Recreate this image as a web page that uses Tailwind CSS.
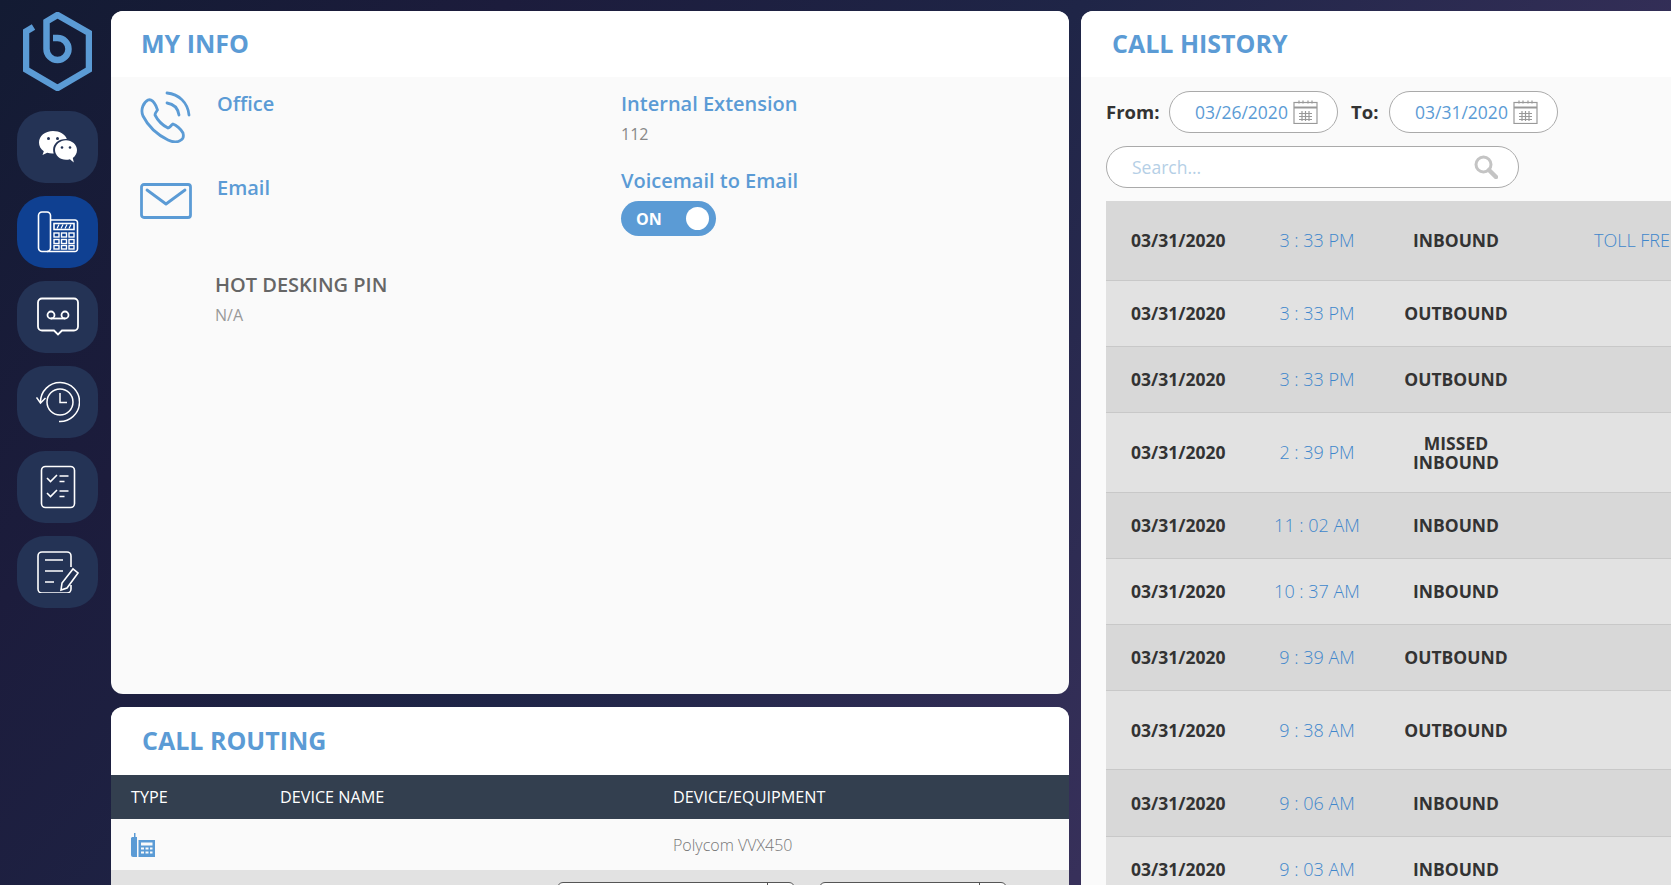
<!DOCTYPE html>
<html lang="en">
<head>
    <meta charset="UTF-8">
    <meta name="viewport" content="width=device-width, initial-scale=1.0">
    <title>Dashboard</title>
    <script src="https://cdn.jsdelivr.net/npm/@tailwindcss/browser@4"></script>
</head>
<body class="h-[885px] w-[1671px] overflow-hidden bg-[linear-gradient(130deg,#131b33_0%,#1c1c3c_21%,#1f2547_45%,#37305a_75%,#3a3260_100%)] font-['Open_Sans',sans-serif]">
    <div class="flex h-full">
        <!-- sidebar -->
        <nav class="w-[111px] shrink-0 flex flex-col items-start pl-[17px]">
            <svg class="ml-[6px] mt-[12px] mb-[20px]" width="69" height="79" viewBox="0 0 69 79" fill="none" stroke="#5b9bd5" stroke-width="6.500">
                <path d="M10.500 15 L3 19.500 V57.500 L34.500 76 L66 57.500 V21 L34.500 3 L23.500 9.500 V37 A11 11 0 1 0 34.500 26 H30" />
            </svg>
            <a class="w-[81px] h-[72px] rounded-[28px] bg-[#243355] flex items-center justify-center">
                <svg width="40" height="34" viewBox="0 0 40 34" fill="#fff">
                    <path d="M15 1C7 1 1 6 1 12.500c0 3.600 1.800 6.600 4.800 8.700L4.500 25l4.700-2.300c1.600.5 3.300.8 5 .8.500 0 1 0 1.500-.1-.4-1.200-.6-2.400-.6-3.700 0-6 5.600-10.700 12.500-10.700h1.200C27.300 4.300 21.700 1 15 1z"/>
                    <path d="M39 20c0-5.500-5.200-9.800-11-9.800S17 14.500 17 20s5.200 9.800 11 9.800c1.400 0 2.700-.2 3.900-.6l3.900 3.300-1-4.600C37.300 26.300 39 23.400 39 20z"/>
                    <g fill="#243355"><circle cx="10.500" cy="8.500" r="1.500"/><circle cx="19.500" cy="8.500" r="1.500"/><circle cx="24" cy="17.500" r="1.300"/><circle cx="32" cy="17.500" r="1.300"/></g>
                </svg>
            </a>
            <a class="mt-[13px] w-[81px] h-[72px] rounded-[28px] bg-[#0f4091] flex items-center justify-center">
                <svg width="42" height="42" viewBox="0 0 42 42" fill="none" stroke="#fff" stroke-width="1.600">
                    <path d="M5 1h5a3.500 3.500 0 0 1 3.500 3.500V37a3.500 3.500 0 0 1-3.500 3.500H5A3.500 3.500 0 0 1 1.500 37V4.500A3.500 3.500 0 0 1 5 1z"/>
                    <path d="M13.500 9H38a2.500 2.500 0 0 1 2.500 2.500V38a2.500 2.500 0 0 1-2.500 2.500H10"/>
                    <rect x="17" y="12.500" width="20" height="6"/>
                    <path d="M20 17.500l2-4M24 17.500l2-4M28 17.500l2-4M32 17.500l2-4" stroke-width="1.200"/>
                    <g stroke-width="1.400">
                        <rect x="17" y="22" width="5" height="4"/><rect x="24.500" y="22" width="5" height="4"/><rect x="32" y="22" width="5" height="4"/>
                        <rect x="17" y="28.500" width="5" height="4"/><rect x="24.500" y="28.500" width="5" height="4"/><rect x="32" y="28.500" width="5" height="4"/>
                        <rect x="17" y="34.500" width="5" height="3.500"/><rect x="24.500" y="34.500" width="5" height="3.500"/><rect x="32" y="34.500" width="5" height="3.500"/>
                    </g>
                </svg>
            </a>
            <a class="mt-[13px] w-[81px] h-[72px] rounded-[28px] bg-[#243355] flex items-center justify-center">
                <svg width="44" height="40" viewBox="0 0 44 40" fill="none" stroke="#fff" stroke-width="1.800">
                    <path d="M6 1.500h32a4 4 0 0 1 4 4v24a4 4 0 0 1-4 4H26l-4 4-4-4H6a4 4 0 0 1-4-4v-24a4 4 0 0 1 4-4z"/>
                    <circle cx="15" cy="18" r="3.500"/><circle cx="29" cy="18" r="3.500"/><path d="M15 21.500h14"/>
                </svg>
            </a>
            <a class="mt-[13px] w-[81px] h-[72px] rounded-[28px] bg-[#243355] flex items-center justify-center">
                <svg width="44" height="42" viewBox="0 0 44 42" fill="none" stroke="#fff" stroke-width="1.500">
                    <circle cx="24" cy="21" r="13"/>
                    <path d="M24 12v9.500h7"/>
                    <path d="M4.500 21A19.500 19.500 0 1 1 23 40.500"/>
                    <path d="M0.500 16.500L4.500 22L9.500 17"/>
                </svg>
            </a>
            <a class="mt-[13px] w-[81px] h-[72px] rounded-[28px] bg-[#243355] flex items-center justify-center">
                <svg width="36" height="44" viewBox="0 0 36 44" fill="none" stroke="#fff" stroke-width="1.600">
                    <rect x="1.500" y="1.500" width="33" height="41" rx="4"/>
                    <path d="M7 13l3.500 3.500L17 10M7 28l3.500 3.500L17 25"/>
                    <path d="M19.500 11h9M19.500 16.500h5M19.500 26h9M19.500 31.500h5"/>
                </svg>
            </a>
            <a class="mt-[13px] w-[81px] h-[72px] rounded-[28px] bg-[#243355] flex items-center justify-center">
                <svg width="42" height="42" viewBox="0 0 42 42" fill="none" stroke="#fff" stroke-width="1.600">
                    <path d="M34 16V5a4 4 0 0 0-4-4H5a4 4 0 0 0-4 4v33a4 4 0 0 0 4 4h25a4 4 0 0 0 4-4v-4"/>
                    <path d="M8 9h18M8 20h18M8 31h9"/>
                    <path d="M25 32l-1 7 6-2 11-15-5-4z"/>
                </svg>
            </a>
        </nav>

        <!-- left column -->
        <div class="w-[958px] shrink-0 pt-[11px] flex flex-col gap-[13px]">
            <section class="h-[683px] rounded-[12px] overflow-hidden bg-[#fafafa]">
                <header class="h-[66px] bg-white flex items-center pl-[30px]">
                    <h2 class="text-[25px] font-bold text-[#5b9bd5]">MY INFO</h2>
                </header>
                <div class="flex">
                    <div class="w-[510px] shrink-0 pl-[29px] pt-[14px]">
                        <div class="flex h-[84px]">
                            <svg class="shrink-0" width="52" height="52" viewBox="-1 -1 52 52" fill="none" stroke="#5b9bd5" stroke-width="2.800" stroke-linecap="round" stroke-linejoin="round">
                                <path d="M7 8C10 7 13 10 15 14L16.500 18C15 20 14 21 14 23C17 29 21 33 27 36C29 36 30 33 32 32C35 33 40 37 42 41C43 45 42 47 40 48C36 51 31 50 27 48C17 43 7 34 2 24C-1 17 3 10 7 8Z"/>
                                <path d="M26 11C33 12 37 17 38 23"/>
                                <path d="M26 1C38 2 47 11 48 23"/>
                            </svg>
                            <div class="pl-[25px] -mt-[1px] text-[20px] font-semibold leading-[28px] text-[#5b9bd5]">Office</div>
                        </div>
                        <div class="flex">
                            <svg class="shrink-0 mt-[8px]" width="52" height="36" viewBox="0 0 52 36" fill="none" stroke="#5b9bd5" stroke-width="2.800" stroke-linejoin="round" stroke-linecap="round">
                                <rect x="1.500" y="1.500" width="49" height="33" rx="2.500"/>
                                <path d="M7 7l19 14L45 7"/>
                            </svg>
                            <div class="pl-[25px] -mt-[1px] text-[20px] font-semibold leading-[28px] text-[#5b9bd5]">Email</div>
                        </div>
                        <div class="pl-[75px] pt-[52px]">
                            <div class="text-[20px] font-semibold leading-[28px] text-[#666]">HOT DESKING PIN</div>
                            <div class="mt-[4px] text-[16px] leading-[24px] text-[#999]">N/A</div>
                        </div>
                    </div>
                    <div class="pt-[13px]">
                        <div class="text-[20px] font-semibold leading-[28px] text-[#5b9bd5]">Internal Extension</div>
                        <div class="mt-[4px] text-[16px] leading-[24px] text-[#888]">112</div>
                        <div class="mt-[21px] text-[20px] font-semibold leading-[28px] text-[#5b9bd5]">Voicemail to Email</div>
                        <div class="mt-[6px] w-[95px] h-[35px] rounded-full bg-[#5b9bd5] flex items-center justify-between pl-[15px] pr-[7px]">
                            <span class="text-[16px] font-bold text-white">ON</span>
                            <span class="w-[23px] h-[23px] rounded-full bg-white"></span>
                        </div>
                    </div>
                </div>
            </section>

            <section class="flex-1 rounded-t-[12px] overflow-hidden bg-[#e2e2e2]">
                <header class="h-[68px] bg-white flex items-center pl-[31px]">
                    <h2 class="text-[25px] font-bold text-[#5b9bd5]">CALL ROUTING</h2>
                </header>
                <div class="h-[44px] bg-[#333f4f] flex items-center text-[16.200px] text-white">
                    <span class="w-[169px] pl-[20px]">TYPE</span>
                    <span class="w-[393px]">DEVICE NAME</span>
                    <span>DEVICE/EQUIPMENT</span>
                </div>
                <div class="h-[51px] bg-[#fafafa] flex items-center text-[16px] font-light text-[#777]">
                    <span class="w-[562px] pl-[19px]">
                        <svg width="25" height="24" viewBox="0 0 25 24" fill="#5b9bd5">
                            <path d="M2 4h2V0h1.500v4H7v20H3a2 2 0 0 1-2-2V5z"/>
                            <path fill-rule="evenodd" d="M8.500 7H25v17H8.500zM11 9.500v3h11.500v-3zM11 14.500v2h3v-2zM15.500 14.500v2h3v-2zM20 14.500v2h2.500v-2zM11 18.500v2h3v-2zM15.500 18.500v2h3v-2zM20 18.500v2h2.500v-2z"/>
                        </svg>
                    </span>
                    <span>Polycom VVX450</span>
                </div>
                <div class="flex pt-[12px] pl-[446px] gap-[24px]">
                    <div class="w-[238px] h-[36px] rounded-[6px] border border-[#555] bg-white flex justify-end"><span class="w-[27px] border-l border-[#555]"></span></div>
                    <div class="w-[188px] h-[36px] rounded-[6px] border border-[#555] bg-white flex justify-end"><span class="w-[27px] border-l border-[#555]"></span></div>
                </div>
            </section>
        </div>

        <!-- right column -->
        <section class="ml-[12px] mt-[11px] w-[700px] shrink-0 rounded-tl-[12px] overflow-hidden bg-[#fafafa]">
            <header class="h-[66px] bg-white flex items-center pl-[31px]">
                <h2 class="text-[25px] font-bold text-[#5b9bd5]">CALL HISTORY</h2>
            </header>
            <div class="pl-[25px] pt-[14px]">
                <div class="flex items-center h-[42px]">
                    <label class="w-[63px] text-[18.500px] font-bold text-[#333]">From:</label>
                    <div class="w-[169px] h-[42px] rounded-full border border-[#aaa] bg-white flex items-center pl-[25px] gap-[5px]">
                        <span class="text-[17.500px] text-[#5b9bd5]">03/26/2020</span>
                        <svg width="25" height="24" viewBox="0 0 25 24" fill="none" stroke="#999" stroke-width="1.200">
                            <rect x="1" y="2.500" width="23" height="21"/><path d="M1 7.500h23" stroke-width="2"/><path d="M6 0.500v3M10 0.500v3M15 0.500v3M19 0.500v3"/><path d="M9 11v10M12.500 11v10M16 11v10M6 13.500h13M6 16.500h13M6 19.500h13"/>
                        </svg>
                    </div>
                    <label class="w-[51px] pl-[13px] text-[18.500px] font-bold text-[#333]">To:</label>
                    <div class="w-[169px] h-[42px] rounded-full border border-[#aaa] bg-white flex items-center pl-[25px] gap-[5px]">
                        <span class="text-[17.500px] text-[#5b9bd5]">03/31/2020</span>
                        <svg width="25" height="24" viewBox="0 0 25 24" fill="none" stroke="#999" stroke-width="1.200">
                            <rect x="1" y="2.500" width="23" height="21"/><path d="M1 7.500h23" stroke-width="2"/><path d="M6 0.500v3M10 0.500v3M15 0.500v3M19 0.500v3"/><path d="M9 11v10M12.500 11v10M16 11v10M6 13.500h13M6 16.500h13M6 19.500h13"/>
                        </svg>
                    </div>
                </div>
                <div class="mt-[13px] w-[413px] h-[42px] rounded-full border border-[#aaa] bg-white flex items-center justify-between pl-[25px] pr-[20px]">
                    <span class="text-[17.500px] text-[#b5cfe6]">Search...</span>
                    <svg width="24" height="24" viewBox="0 0 24 24" fill="none" stroke="#c4c4c4">
                        <circle cx="9.500" cy="9.500" r="7.500" stroke-width="3"/><path d="M15 15l7 7" stroke-width="4.500" stroke-linecap="round"/>
                    </svg>
                </div>
            </div>
            <div class="mt-[13px] ml-[25px] text-[17.500px] font-bold text-[#333]">
                <div class="h-[80px] bg-[#d8d8d8] border-b border-[#c8c8c8] flex items-center pl-[25px]">
                    <span class="w-[126px]">03/31/2020</span><span class="w-[120px] text-center text-[18px] font-light text-[#3f87cc]">3 : 33 PM</span><span class="w-[158px] text-center leading-[19px]">INBOUND</span><span class="pl-[59px] text-[18px] font-light text-[#3f87cc] whitespace-nowrap">TOLL FREE</span>
                </div>
                <div class="h-[66px] bg-[#e2e2e2] border-b border-[#c8c8c8] flex items-center pl-[25px]">
                    <span class="w-[126px]">03/31/2020</span><span class="w-[120px] text-center text-[18px] font-light text-[#3f87cc]">3 : 33 PM</span><span class="w-[158px] text-center leading-[19px]">OUTBOUND</span>
                </div>
                <div class="h-[66px] bg-[#d8d8d8] border-b border-[#c8c8c8] flex items-center pl-[25px]">
                    <span class="w-[126px]">03/31/2020</span><span class="w-[120px] text-center text-[18px] font-light text-[#3f87cc]">3 : 33 PM</span><span class="w-[158px] text-center leading-[19px]">OUTBOUND</span>
                </div>
                <div class="h-[80px] bg-[#e2e2e2] border-b border-[#c8c8c8] flex items-center pl-[25px]">
                    <span class="w-[126px]">03/31/2020</span><span class="w-[120px] text-center text-[18px] font-light text-[#3f87cc]">2 : 39 PM</span><span class="w-[158px] text-center leading-[19px]">MISSED<br>INBOUND</span>
                </div>
                <div class="h-[66px] bg-[#d8d8d8] border-b border-[#c8c8c8] flex items-center pl-[25px]">
                    <span class="w-[126px]">03/31/2020</span><span class="w-[120px] text-center text-[18px] font-light text-[#3f87cc]">11 : 02 AM</span><span class="w-[158px] text-center leading-[19px]">INBOUND</span>
                </div>
                <div class="h-[66px] bg-[#e2e2e2] border-b border-[#c8c8c8] flex items-center pl-[25px]">
                    <span class="w-[126px]">03/31/2020</span><span class="w-[120px] text-center text-[18px] font-light text-[#3f87cc]">10 : 37 AM</span><span class="w-[158px] text-center leading-[19px]">INBOUND</span>
                </div>
                <div class="h-[66px] bg-[#d8d8d8] border-b border-[#c8c8c8] flex items-center pl-[25px]">
                    <span class="w-[126px]">03/31/2020</span><span class="w-[120px] text-center text-[18px] font-light text-[#3f87cc]">9 : 39 AM</span><span class="w-[158px] text-center leading-[19px]">OUTBOUND</span>
                </div>
                <div class="h-[79px] bg-[#e2e2e2] border-b border-[#c8c8c8] flex items-center pl-[25px]">
                    <span class="w-[126px]">03/31/2020</span><span class="w-[120px] text-center text-[18px] font-light text-[#3f87cc]">9 : 38 AM</span><span class="w-[158px] text-center leading-[19px]">OUTBOUND</span>
                </div>
                <div class="h-[67px] bg-[#d8d8d8] border-b border-[#c8c8c8] flex items-center pl-[25px]">
                    <span class="w-[126px]">03/31/2020</span><span class="w-[120px] text-center text-[18px] font-light text-[#3f87cc]">9 : 06 AM</span><span class="w-[158px] text-center leading-[19px]">INBOUND</span>
                </div>
                <div class="h-[66px] bg-[#e2e2e2] border-b border-[#c8c8c8] flex items-center pl-[25px]">
                    <span class="w-[126px]">03/31/2020</span><span class="w-[120px] text-center text-[18px] font-light text-[#3f87cc]">9 : 03 AM</span><span class="w-[158px] text-center leading-[19px]">INBOUND</span>
                </div>
            </div>
        </section>
    </div>
</body>
</html>
